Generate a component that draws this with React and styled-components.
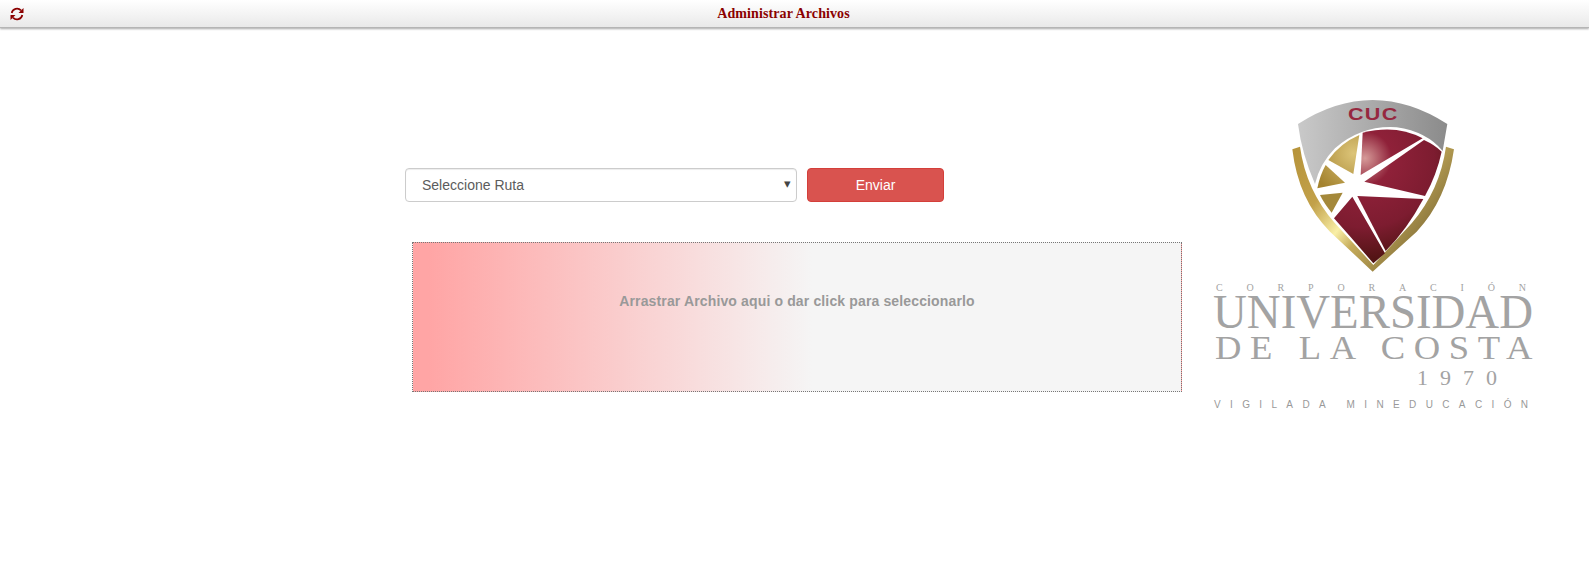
import React from "react";
import styled, { createGlobalStyle } from "styled-components";

const GlobalStyle = createGlobalStyle`
  html, body {
    margin: 0;
    background: #fff;
    font-family: "Liberation Sans", Arial, sans-serif;
  }
`;

const TopBar = styled.header`
  display: flex;
  align-items: center;
  height: 28px;
  box-sizing: border-box;
  padding-left: 10px;
  background: linear-gradient(to bottom, #ffffff, #e9e9e9);
  border-bottom: 1px solid #b5b5b5;
  box-shadow: 0 1px 2px rgba(0, 0, 0, 0.35);
  color: #8b0000;
`;

const Title = styled.h1`
  flex: 1;
  margin: 0;
  padding-right: 46px;
  text-align: center;
  font-family: "Liberation Serif", "Times New Roman", serif;
  font-size: 14px;
  font-weight: 700;
  letter-spacing: 0.1px;
`;

const Content = styled.main`
  display: flex;
  align-items: flex-start;
  gap: 29px;
  padding: 62px 0 0 405px;
`;

const Main = styled.div`
  width: 776px;
  padding-top: 78px;
`;

const FormRow = styled.form`
  display: flex;
  align-items: flex-start;
  gap: 10px;
`;

const SelectWrap = styled.div`
  position: relative;
  width: 392px;
  height: 34px;

  &::after {
    content: "▾";
    position: absolute;
    top: 8px;
    right: 6px;
    color: #444;
    font-size: 13px;
    line-height: 16px;
    pointer-events: none;
  }
`;

const RouteSelect = styled.select`
  appearance: none;
  width: 100%;
  height: 100%;
  padding: 0 16px;
  background: #fff;
  border: 1px solid #ccc;
  border-radius: 4px;
  color: #5c5c5c;
  font-family: inherit;
  font-size: 14px;
  box-shadow: inset 0 1px 1px rgba(0, 0, 0, 0.075);
`;

const SendButton = styled.button`
  width: 137px;
  height: 34px;
  background: #d9534f;
  border: 1px solid #d43f3a;
  border-radius: 4px;
  color: #fff;
  font-family: inherit;
  font-size: 14px;
`;

const DropZone = styled.div`
  display: flex;
  justify-content: center;
  box-sizing: border-box;
  width: 770px;
  height: 150px;
  margin: 40px 0 0 7px;
  padding-top: 50px;
  background: linear-gradient(to right, #ffa5a5 2%, #f5f5f5 52%);
  border: 1px dotted #777;
  color: #999;
  font-size: 14px;
  font-weight: 700;
  letter-spacing: 0.14px;
`;

const RefreshIcon = () => (
  <svg width="14" height="14" viewBox="0 0 14 14" fill="none">
    <path d="M1.7 6 A5.4 5.4 0 0 1 11 3.4" stroke="currentColor" strokeWidth="1.7" />
    <path d="M12.3 8 A5.4 5.4 0 0 1 3 10.6" stroke="currentColor" strokeWidth="1.7" />
    <path d="M13.5 1 V6 H8.5 Z" fill="currentColor" />
    <path d="M0.5 13 V8 H5.5 Z" fill="currentColor" />
  </svg>
);

const Logo = () => (
  <svg width="330" height="330" viewBox="0 0 330 330">
    <defs>
      <linearGradient id="band" x1="0" y1="0" x2="1" y2="0.6">
        <stop offset="0" stopColor="#b6933a" />
        <stop offset="0.3" stopColor="#c2a14a" />
        <stop offset="0.5" stopColor="#f9efa6" />
        <stop offset="0.62" stopColor="#c5ab5a" />
        <stop offset="1" stopColor="#7a6734" />
      </linearGradient>
      <linearGradient id="steel" x1="0" y1="0" x2="1" y2="0">
        <stop offset="0" stopColor="#c9c9c9" />
        <stop offset="1" stopColor="#8b8b8b" />
      </linearGradient>
      <radialGradient id="wine" gradientUnits="userSpaceOnUse" cx="285" cy="205" r="320">
        <stop offset="0" stopColor="#d69a98" />
        <stop offset="0.25" stopColor="#8f2139" />
        <stop offset="0.65" stopColor="#7d1c30" />
        <stop offset="0.95" stopColor="#521414" />
      </radialGradient>
      <radialGradient id="gold" gradientUnits="userSpaceOnUse" cx="250" cy="190" r="130">
        <stop offset="0" stopColor="#dcc478" />
        <stop offset="1" stopColor="#a4832f" />
      </radialGradient>
    </defs>
    <g transform="translate(60 0) scale(0.3333)">
      <path d="M67 178 L90 170 Q108 300 195 400 L310 525 L425 400 Q510 300 528 170 L552 178 Q530 330 440 425 L308 545 L180 425 Q85 330 67 178 Z" fill="url(#band)" />
      <path d="M84 102 Q308 -42 532 102 L518 183 Q470 125 380 112 Q275 105 195 175 Q150 220 135 282 Q95 190 84 102 Z" fill="url(#steel)" />
      <path d="M278 128 Q380 102 458 145 L272 255 Z" fill="url(#wine)" />
      <path d="M462 150 Q495 165 515 185 Q500 255 465 318 L283 275 Z" fill="url(#wine)" />
      <path d="M262 318 L460 327 Q410 420 347 483 Z" fill="url(#wine)" />
      <path d="M247 320 L345 490 L310 520 Q250 450 192 385 Z" fill="url(#wine)" />
      <path d="M268 135 L250 252 L175 210 Q210 160 268 135 Z" fill="url(#gold)" />
      <path d="M167 225 L225 278 L142 295 Q150 255 167 225 Z" fill="url(#gold)" />
      <path d="M150 315 L218 308 L185 368 Q162 340 150 315 Z" fill="#a4883a" />
      <text x="234" y="91" textLength="152" lengthAdjust="spacingAndGlyphs" letterSpacing="3" fill="#96283f" fontFamily="Liberation Sans, sans-serif" fontSize="50" fontWeight="700">CUC</text>
    </g>
    <g fill="#a3a3a3">
      <text x="6" y="201" textLength="310" fontFamily="Liberation Serif, serif" fontSize="10">CORPORACIÓN</text>
      <text transform="translate(3 238) scale(1 1.15)" textLength="320" lengthAdjust="spacingAndGlyphs" fontFamily="Liberation Serif, serif" fontSize="42">UNIVERSIDAD</text>
      <text x="5" y="269" textLength="326" lengthAdjust="spacingAndGlyphs" letterSpacing="8" fontFamily="Liberation Serif, serif" fontSize="34">DE LA COSTA</text>
      <text x="207" y="295" textLength="80" fontFamily="Liberation Serif, serif" fontSize="22">1970</text>
      <text x="4" y="318" textLength="314" fill="#999" fontFamily="Liberation Sans, sans-serif" fontSize="10">VIGILADA MINEDUCACIÓN</text>
    </g>
  </svg>
);

export default function App() {
  return (
    <>
      <GlobalStyle />
      <TopBar>
        <RefreshIcon />
        <Title>Administrar Archivos</Title>
      </TopBar>
      <Content>
        <Main>
          <FormRow>
            <SelectWrap>
              <RouteSelect defaultValue="">
                <option value="">Seleccione Ruta</option>
              </RouteSelect>
            </SelectWrap>
            <SendButton type="button">Enviar</SendButton>
          </FormRow>
          <DropZone>Arrastrar Archivo aqui o dar click para seleccionarlo</DropZone>
        </Main>
        <Logo />
      </Content>
    </>
  );
}
